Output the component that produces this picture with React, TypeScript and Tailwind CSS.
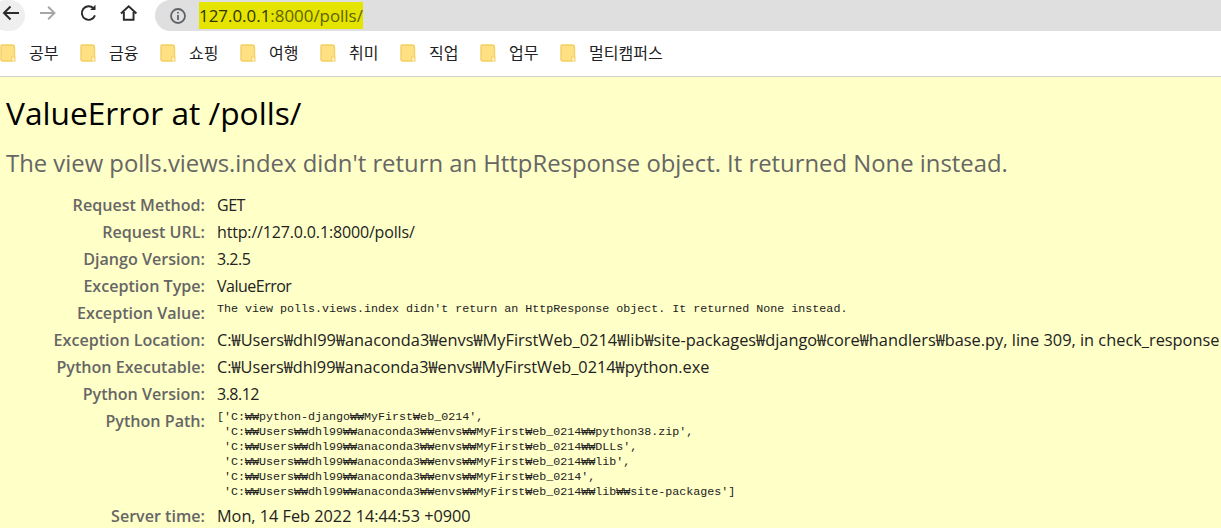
const bookmarks = ['공부', '금융', '쇼핑', '여행', '취미', '직업', '업무', '멀티캠퍼스'];

const sans = 'font-["Open_Sans","Noto_Sans_CJK_KR",sans-serif]';

const rows = [
  { label: 'Request Method:', value: 'GET', size: 'text-[16px] tracking-[-0.5px]' },
  { label: 'Request URL:', value: 'http://127.0.0.1:8000/polls/', size: 'text-[16px] tracking-[-0.16px]' },
  { label: 'Django Version:', value: '3.2.5', size: 'text-[16px] tracking-[-0.5px]' },
  { label: 'Exception Type:', value: 'ValueError', size: 'text-[16px] tracking-[-0.5px]' },
  { label: 'Exception Value:', pre: ["The view polls.views.index didn't return an HttpResponse object. It returned None instead."] },
  { label: 'Exception Location:', value: 'C:₩Users₩dhl99₩anaconda3₩envs₩MyFirstWeb_0214₩lib₩site-packages₩django₩core₩handlers₩base.py, line 309, in check_response', size: 'text-[16.35px]' },
  { label: 'Python Executable:', value: 'C:₩Users₩dhl99₩anaconda3₩envs₩MyFirstWeb_0214₩python.exe', size: 'text-[16.3px]' },
  { label: 'Python Version:', value: '3.8.12', size: 'text-[16px] tracking-[-0.5px]' },
  {
    label: 'Python Path:',
    pre: [
      "['C:₩₩python-django₩₩MyFirst₩eb_0214',",
      " 'C:₩₩Users₩₩dhl99₩₩anaconda3₩₩envs₩₩MyFirst₩eb_0214₩₩python38.zip',",
      " 'C:₩₩Users₩₩dhl99₩₩anaconda3₩₩envs₩₩MyFirst₩eb_0214₩₩DLLs',",
      " 'C:₩₩Users₩₩dhl99₩₩anaconda3₩₩envs₩₩MyFirst₩eb_0214₩₩lib',",
      " 'C:₩₩Users₩₩dhl99₩₩anaconda3₩₩envs₩₩MyFirst₩eb_0214',",
      " 'C:₩₩Users₩₩dhl99₩₩anaconda3₩₩envs₩₩MyFirst₩eb_0214₩₩lib₩₩site-packages']",
    ],
  },
  { label: 'Server time:', value: 'Mon, 14 Feb 2022 14:44:53 +0900', size: 'text-[16.25px]' },
];

function Folder() {
  return (
    <svg width="16" height="18" viewBox="0 0 16 18" className="shrink-0">
      <path d="M1.5 1 H12 Q14.5 1 14.5 3.5 V13 L11.5 17 H2.5 Q1 17 1 15.5 V2 Q1 1 1.5 1 Z" fill="#ffe083" stroke="#f5cf63" strokeWidth="1.4" />
      <rect x="11.5" y="13" width="3.5" height="4" fill="#fff3c4" stroke="#f5cf63" />
    </svg>
  );
}

export default function App() {
  return (
    <div className={`h-[528px] w-[1221px] overflow-hidden bg-white ${sans}`}>
      {/* toolbar */}
      <div className="flex h-[37px] items-start overflow-hidden">
        <div className="ml-[-9px] flex h-[31px] w-[35px] items-center justify-center rounded-full bg-[#efefef]">
          <svg width="20" height="20" viewBox="0 0 20 20" fill="none" stroke="#2b2b2b" strokeWidth="2" className="mb-[6px] ml-[6px]">
            <path d="M18 10 H3 M9.5 3.5 L3 10 L9.5 16.5" />
          </svg>
        </div>
        <svg width="20" height="20" viewBox="0 0 20 20" fill="none" stroke="#a6a6a6" strokeWidth="2" className="ml-[13px] mt-[3px]">
          <path d="M2 10 H17 M10.5 3.5 L17 10 L10.5 16.5" />
        </svg>
        <svg width="20" height="20" viewBox="0 0 20 20" fill="none" stroke="#2b2b2b" strokeWidth="2" className="ml-[22px] mt-[3px]">
          <path d="M16.5 12.5 A7 7 0 1 1 15 5.2" />
          <path d="M17 1.5 V7 H11.5" fill="#2b2b2b" stroke="none" />
        </svg>
        <svg width="20" height="20" viewBox="0 0 20 20" fill="none" stroke="#2b2b2b" strokeWidth="2" className="ml-[20px] mt-[3px]">
          <path d="M2 10.5 L10 3 L18 10.5 M5 9 V17 H15 V9" />
        </svg>
        <div className="ml-[17px] flex h-[31px] w-[1100px] items-center rounded-l-full bg-[#dfdfdf]">
          <svg width="18" height="18" viewBox="0 0 18 18" fill="none" stroke="#5f6368" strokeWidth="1.8" className="ml-[14px]">
            <circle cx="9" cy="9" r="7" />
            <path d="M9 8 V13 M9 5 V6.6" />
          </svg>
          <div className="ml-[12px] text-[16.9px] leading-[24px]">
            <span className="bg-[#e4e400] py-[2px] text-[#333300]">127.0.0.1</span>
            <span className="bg-[#e4e400] py-[2px] text-[#5f6300]">:8000/polls/</span>
          </div>
        </div>
      </div>

      {/* bookmarks */}
      <div className="flex h-[40px] items-start border-b border-[#cfcfcf] pt-[6px]">
        {bookmarks.map((name) => (
          <div key={name} className="flex w-[80px] shrink-0 items-center">
            <Folder />
            <span className="ml-[13px] whitespace-nowrap text-[16px] leading-[20px] text-[#222]">{name}</span>
          </div>
        ))}
      </div>

      {/* error summary */}
      <div className="h-[451px] overflow-hidden bg-[#ffffc8] pl-[6px] pt-[15px]">
        <h1 className="text-[31.7px] leading-[42px] text-black">ValueError at /polls/</h1>
        <p className="mt-[13px] text-[23.85px] leading-[32px] text-[#666]">
          The view polls.views.index didn't return an HttpResponse object. It returned None instead.
        </p>
        <div className="mt-[12px] flex flex-col">
          {rows.map((r) => (
            <div key={r.label} className="flex min-h-[27px]">
              <div className="mr-[12px] w-[199px] shrink-0 pt-[2px] text-right text-[16.1px] font-semibold leading-[25px] text-[#666]">
                {r.label}
              </div>
              {r.pre ? (
                <pre className='pb-[2px] pt-[3px] font-["Liberation_Mono",monospace] text-[11.68px] leading-[15px] text-[#222]'>
                  {r.pre.join('\n')}
                </pre>
              ) : (
                <div className={`whitespace-nowrap pt-[2px] leading-[25px] text-[#222] ${r.size}`}>{r.value}</div>
              )}
            </div>
          ))}
        </div>
      </div>
    </div>
  );
}
